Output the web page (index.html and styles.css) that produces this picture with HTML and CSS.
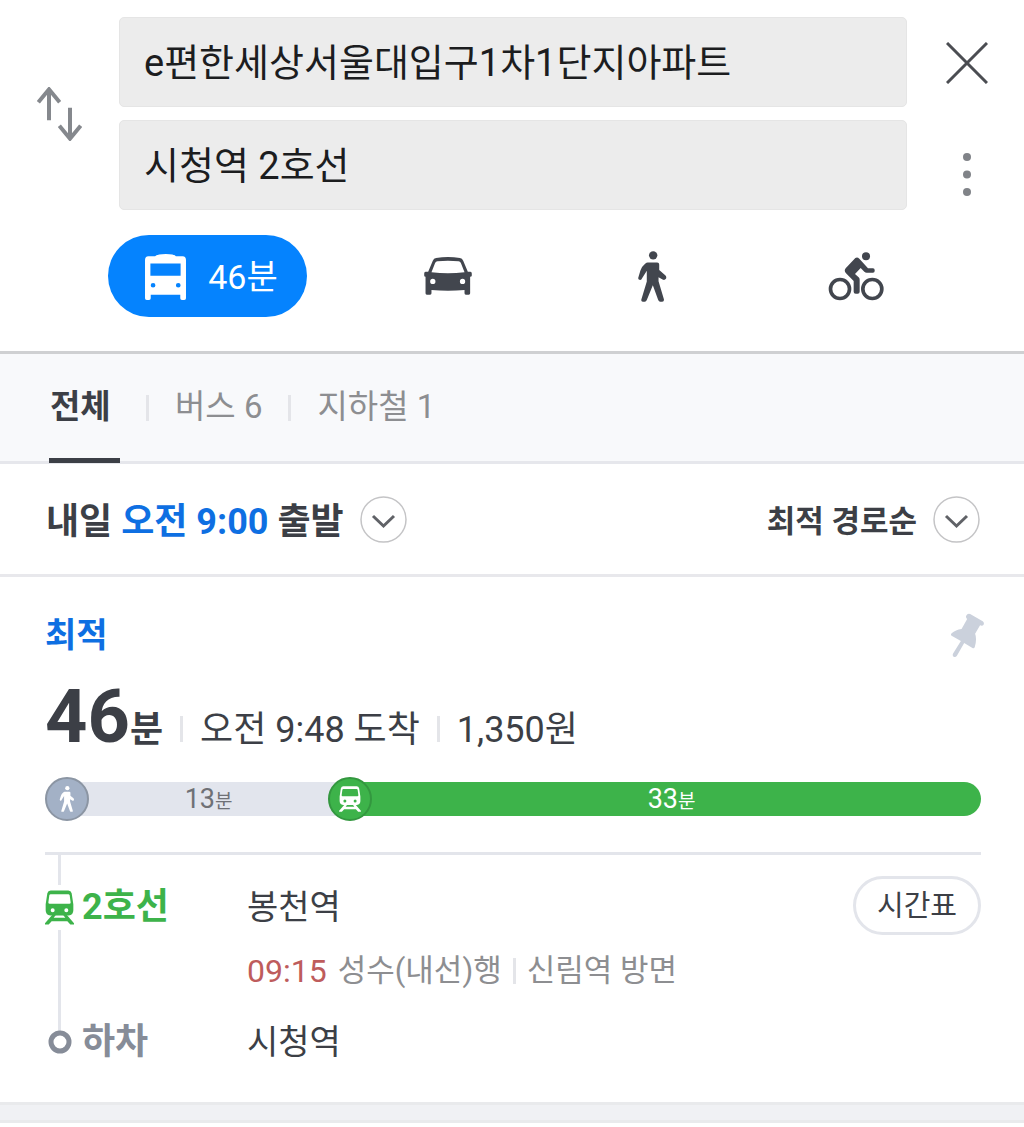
FILE: index.html
```html
<!DOCTYPE html>
<html lang="ko">
<head>
<meta charset="utf-8">
<meta name="viewport" content="width=device-width, initial-scale=1">
<title>길찾기</title>
<link rel="stylesheet" href="styles.css">
</head>
<body>
<svg class="sprite" aria-hidden="true">
  <symbol id="walker" viewBox="114 92 86 152">
    <circle cx="159" cy="105" r="12.5"/>
    <path d="M143 126H171Q177 126 177 132V149L195 164Q200 169 197 175Q193 180 187 177L175 170V182L191 236Q192 243 186 243H180Q176 243 174 238L158 194L140 238Q138 243 134 243H128Q122 243 124 236L140 183V151L126 173Q124 180 118 178Q113 176 115 170L121 150Q125 138 135 130Q139 126 143 126Z"/>
  </symbol>
  <symbol id="train" viewBox="75 388 87 104">
    <path fill-rule="evenodd" d="M92 389H145Q153 389 155 397L160 430V448Q160 462 146 464H91Q77 462 77 448V430L82 397Q84 389 92 389ZM92 400Q89 400 88 403L85 425Q85 429 89 429H148Q152 429 152 425L149 403Q148 400 145 400ZM98 442A6 6 0 1 0 98 454A6 6 0 1 0 98 442ZM139 442A6 6 0 1 0 139 454A6 6 0 1 0 139 442Z"/>
    <path d="M97 462H108L101 471H136L129 462H140L162 487V491H151L142 481H95L86 491H75V487Z"/>
  </symbol>
</svg>

<header class="search">
  <button class="icon-btn swap" type="button" aria-label="출발지와 도착지 바꾸기">
    <svg width="45" height="54" viewBox="110 260 135 162"><path d="M146 360V266M114 306L146 267L178 306M209 322V416M177 376L209 415L241 376" fill="none" stroke="#85888d" stroke-width="12"/></svg>
  </button>
  <div class="fields">
    <input class="field" type="text" aria-label="출발지" value="e편한세상서울대입구1차1단지아파트">
    <input class="field" type="text" aria-label="도착지" value="시청역 2호선">
  </div>
  <div class="actions">
    <button class="icon-btn" type="button" aria-label="닫기">
      <svg width="42" height="42" viewBox="0 0 42 42"><path d="M1 1L41 41M41 1L1 41" stroke="#4b4d52" stroke-width="3"/></svg>
    </button>
    <button class="icon-btn" type="button" aria-label="더보기">
      <svg width="8" height="43" viewBox="0 0 8 43"><g fill="#808388"><circle cx="4" cy="4" r="4"/><circle cx="4" cy="21.500" r="4"/><circle cx="4" cy="39" r="4"/></g></svg>
    </button>
  </div>
</header>

<nav class="modes" aria-label="이동 수단">
  <button class="mode mode-active" type="button">
    <svg width="41" height="46" viewBox="166 100 122 137"><path fill="#fff" fill-rule="evenodd" d="M176 107H196Q202 100 228 100T258 107H278Q288 108 288 118V232Q288 237 283 237H276Q271 237 271 232V221H183V232Q183 237 178 237H171Q166 237 166 232V118Q166 108 176 107ZM182 128V165H272V128ZM190 186A7 7 0 1 0 190 200A7 7 0 1 0 190 186ZM265 186A7 7 0 1 0 265 200A7 7 0 1 0 265 186Z"/></svg>
    <span>46분</span>
  </button>
  <button class="mode" type="button" aria-label="자동차">
    <svg width="48" height="38" viewBox="1002 111 144 115"><path fill="#42464e" fill-rule="evenodd" d="M1038 114Q1074 108 1110 114Q1117 115 1120 122L1134 156H1142Q1146 156 1146 161V167Q1146 171 1141 171V221Q1141 225 1137 225H1128Q1124 225 1124 221V211Q1074 215 1024 211V221Q1024 225 1020 225H1010Q1006 225 1006 221V171Q1002 171 1002 167V161Q1002 156 1006 156H1014L1028 122Q1031 115 1038 114ZM1042 124Q1037 125 1035 129L1024 157Q1074 163 1124 157L1113 129Q1111 125 1106 124Q1074 120 1042 124ZM1028 177A8 8 0 1 0 1028 193A8 8 0 1 0 1028 177ZM1118 177A8 8 0 1 0 1118 193A8 8 0 1 0 1118 177Z"/></svg>
  </button>
  <button class="mode" type="button" aria-label="도보">
    <svg width="29" height="51" fill="#42464e"><use href="#walker"/></svg>
  </button>
  <button class="mode" type="button" aria-label="자전거">
    <svg width="56" height="49" viewBox="682 94 168 147"><g fill="none" stroke="#42464e" stroke-width="11"><circle cx="718" cy="205" r="28.500"/><circle cx="815" cy="205" r="28.500"/></g><g fill="#42464e"><circle cx="796" cy="107" r="12"/><path d="M764 112Q770 108 776 114L802 143H817Q822 143 822 148V151Q822 156 817 156H798Q794 156 791 153L780 142L763 160L774 170Q777 173 777 177V213Q777 219 771 219H765Q759 219 759 213V181L736 158Q729 151 735 143Z"/></g></svg>
  </button>
</nav>

<nav class="tabs" aria-label="경로 유형">
  <a class="tab tab-active" href="#all" aria-current="page">전체</a>
  <span class="bar"></span>
  <a class="tab" href="#bus">버스 6</a>
  <span class="bar"></span>
  <a class="tab" href="#subway">지하철 1</a>
</nav>

<div class="options">
  <button class="option depart" type="button">
    <span>내일 <em>오전 9:00</em> 출발</span>
    <svg width="47" height="47" viewBox="0 0 47 47"><circle cx="23.500" cy="23.500" r="22.500" fill="#fff" stroke="#c4c4c6" stroke-width="1.500"/><path d="M13 20L23.500 30L34 20" fill="none" stroke="#606267" stroke-width="3"/></svg>
  </button>
  <button class="option" type="button">
    <span>최적 경로순</span>
    <svg width="47" height="47" viewBox="0 0 47 47"><circle cx="23.500" cy="23.500" r="22.500" fill="#fff" stroke="#c4c4c6" stroke-width="1.500"/><path d="M13 20L23.500 30L34 20" fill="none" stroke="#606267" stroke-width="3"/></svg>
  </button>
</div>

<main class="route">
  <div class="route-top">
    <strong class="best">최적</strong>
    <button class="icon-btn" type="button" aria-label="경로 고정">
      <svg width="35" height="45" viewBox="630 430 104 136"><path fill="#cbd1dc" d="M678 438Q682 430 690 433L728 455Q734 460 730 466Q727 470 720 467L705 493Q711 508 704 533Q702 538 697 536L672 521L650 559Q646 565 640 562Q636 559 638 553L662 515L634 499Q630 496 634 491Q646 480 664 478L681 448Q676 444 678 438Z"/></svg>
    </button>
  </div>
  <div class="summary">
    <h1 class="total">46<small>분</small></h1>
    <span class="bar"></span>
    <span>오전 9:48 도착</span>
    <span class="bar"></span>
    <span>1,350원</span>
  </div>

  <div class="timeline">
    <div class="leg walk" style="flex-grow: 13">
      <span class="badge"><svg width="16" height="26" fill="#fff"><use href="#walker"/></svg></span>
      <span class="leg-label">13<small>분</small></span>
    </div>
    <div class="leg metro" style="flex-grow: 33">
      <span class="badge"><svg width="22" height="26" fill="#fff"><use href="#train"/></svg></span>
      <span class="leg-label">33<small>분</small></span>
    </div>
  </div>

  <ol class="steps">
    <li class="step">
      <div class="line line-2"><span class="marker"><svg width="29" height="35" fill="#3db34a"><use href="#train"/></svg></span>2호선</div>
      <span class="station">봉천역</span>
      <button class="timetable" type="button">시간표</button>
      <p class="info"><time>09:15</time> <span>성수(내선)행</span><span class="bar"></span><span>신림역 방면</span></p>
    </li>
    <li class="step">
      <div class="line"><span class="marker"><svg width="29" height="24" viewBox="0 0 29 24"><circle cx="15" cy="12" r="9" fill="#fff" stroke="#868c98" stroke-width="5"/></svg></span>하차</div>
      <span class="station">시청역</span>
    </li>
  </ol>
</main>
<div class="divider"></div>
</body>
</html>
```
FILE: styles.css
```css
* { box-sizing: border-box; }

body {
  margin: 0;
  background: #fff;
  color: #3c3f46;
  font-family: Roboto, "Noto Sans CJK KR", sans-serif;
  font-size: 34px;
  line-height: 48px;
}

button {
  margin: 0;
  padding: 0;
  border: 0;
  background: none;
  color: inherit;
  font: inherit;
}

a { color: inherit; text-decoration: none; }
svg { display: block; flex: none; }
.sprite { position: absolute; width: 0; height: 0; }
.icon-btn { display: flex; }

.bar {
  flex: none;
  width: 3px;
  height: 26px;
  background: #e4e5e9;
}

/* search fields */
.search {
  display: grid;
  grid-template-columns: 119px 1fr 117px;
  padding-top: 17px;
}
.swap { align-self: center; justify-self: center; }
.fields { display: grid; gap: 13px; }
.field {
  width: 100%;
  height: 90px;
  padding: 0 24px 6px;
  border: 1px solid #e5e5e5;
  border-radius: 5px;
  background: #ececec;
  color: #1c1d1f;
  font: inherit;
  font-size: 38px;
}
.actions {
  display: flex;
  flex-direction: column;
  align-items: center;
  justify-content: space-between;
  padding: 25px 0 14px 3px;
}

/* travel modes */
.modes {
  display: grid;
  grid-template-columns: 238px 1fr 1fr 1fr;
  padding: 25px 66px 34px 108px;
  border-bottom: 3px solid #cfd0d2;
}
.mode {
  display: flex;
  align-items: center;
  justify-content: center;
  height: 82px;
}
.mode-active {
  gap: 22px;
  width: 199px;
  padding: 2px 0 0 8px;
  border-radius: 41px;
  background: #0583fe;
  color: #fff;
}

/* tabs */
.tabs {
  display: flex;
  align-items: center;
  gap: 26px;
  height: 110px;
  padding: 0 49px;
  border-bottom: 3px solid #e6e7ec;
  background: #f8f9fb;
  color: #8d8e91;
  font-size: 33px;
}
.tab {
  height: 110px;
  line-height: 108px;
}
.tab-active {
  min-width: 71px;
  padding-left: 1px;
  border-bottom: 5px solid #3c3f46;
  color: #3c3f46;
  font-weight: 700;
}

/* departure and sorting */
.options {
  display: flex;
  justify-content: space-between;
  padding: 31px 44px 31px 46px;
  border-bottom: 3px solid #e8e8ec;
}
.option {
  display: flex;
  align-items: center;
  gap: 16px;
  height: 48px;
  font-size: 31px;
  font-weight: 700;
  line-height: 40px;
}
.option span { padding-top: 6px; }
.depart { font-size: 36px; }
.option em { color: #0e6fe2; font-style: normal; }

/* route */
.route { padding: 34px 43px 0 45px; }
.route-top {
  display: flex;
  align-items: center;
  justify-content: space-between;
  margin-right: -4px;
}
.best { color: #0e6fe2; }
.summary {
  display: flex;
  align-items: baseline;
  gap: 17px;
  padding-top: 16px;
  font-size: 36px;
}
.total {
  margin: 0;
  font-size: 74px;
  line-height: 84px;
}
.total small { font-size: 36px; }

.timeline { display: flex; padding-top: 5px; }
.leg {
  display: flex;
  flex: 1 1 43px;
  align-items: center;
}
.badge {
  z-index: 1;
  display: grid;
  flex: none;
  place-items: center;
  width: 44px;
  height: 44px;
  border: 2px solid;
  border-radius: 50%;
}
.leg-label {
  flex: 1;
  height: 34px;
  margin: 0 -22px;
  padding: 0 22px;
  font-size: 27px;
  line-height: 34px;
  text-align: center;
}
.leg-label small { font-size: 19px; }
.walk .badge { border-color: #8b95a3; background: #a3b1c6; }
.walk .leg-label { background: #e2e5ed; color: #6f7176; }
.metro .badge { border-color: #33973f; background: #3db34a; }
.metro .leg-label {
  margin-right: 0;
  padding-right: 10px;
  border-radius: 0 17px 17px 0;
  background: #3db34a;
  color: #fff;
}

/* steps */
.steps {
  margin: 31px 0 0;
  padding: 0 0 30px;
  border-top: 3px solid #e3e5eb;
  list-style: none;
}
.step {
  position: relative;
  display: grid;
  grid-template-columns: 202px 1fr auto;
  align-items: center;
  min-height: 60px;
}
.step:first-child { row-gap: 13px; padding: 21px 0 18px; }
.step::before {
  content: "";
  position: absolute;
  top: 0;
  bottom: 0;
  left: 13px;
  width: 3px;
  background: #e3e5eb;
}
.step:last-child::before { bottom: 50%; }
.line {
  position: relative;
  display: flex;
  align-items: center;
  gap: 8px;
  color: #868c98;
  font-size: 36px;
  font-weight: 700;
}
.line-2 { color: #3db34a; }
.line-2,
.line-2 + .station { padding-top: 3px; }
.line-2 .marker { padding: 5px 0; background: #fff; }
.timetable {
  width: 128px;
  height: 59px;
  border: 3px solid #e3e5eb;
  border-radius: 30px;
  font-size: 29px;
}
.info {
  display: flex;
  grid-column: 2 / -1;
  align-items: center;
  gap: 11px;
  margin: 0;
  color: #8d8e91;
  font-size: 31px;
  line-height: 46px;
}
.info time { color: #be5c5c; font-size: 32px; }

.divider {
  height: 21px;
  border: solid #e9eaec;
  border-width: 3px 0;
  background: #f0f1f4;
}
```
